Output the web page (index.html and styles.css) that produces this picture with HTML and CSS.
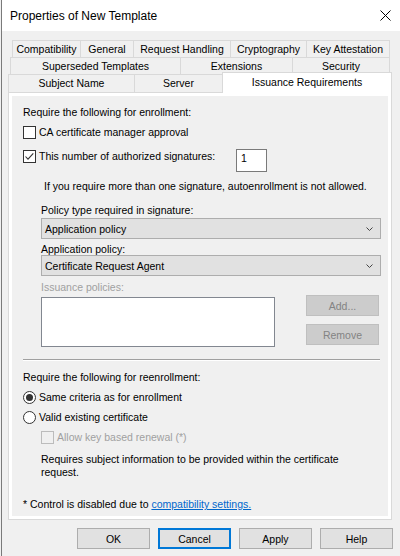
FILE: index.html
```html
<!DOCTYPE html>
<html lang="en">
<head>
<meta charset="utf-8">
<title>Properties of New Template</title>
<link rel="stylesheet" href="styles.css">
</head>
<body>
<div class="window">
  <header class="titlebar">
    <span class="title">Properties of New Template</span>
    <svg class="close" width="11" height="11" viewBox="0 0 11 11" aria-label="Close">
      <path d="M0.5 0.5 L10.5 10.5 M10.5 0.5 L0.5 10.5" stroke="#000" stroke-width="1" fill="none"/>
    </svg>
  </header>

  <nav class="tabs">
    <div class="tab-row row-1">
      <div class="tab t-compat">Compatibility</div>
      <div class="tab t-general">General</div>
      <div class="tab t-request">Request Handling</div>
      <div class="tab t-crypto">Cryptography</div>
      <div class="tab t-attest">Key Attestation</div>
    </div>
    <div class="tab-row row-2">
      <div class="tab t-superseded">Superseded Templates</div>
      <div class="tab t-ext">Extensions</div>
      <div class="tab t-security">Security</div>
    </div>
    <div class="tab-row row-3">
      <div class="tab t-subject">Subject Name</div>
      <div class="tab t-server">Server</div>
      <div class="tab t-issuance active">Issuance Requirements</div>
    </div>
  </nav>

  <section class="panel">
    <div class="page">
      <div class="heading">Require the following for enrollment:</div>

      <label class="check-row row-ca">
        <span class="check"></span>
        <span>CA certificate manager approval</span>
      </label>

      <div class="sig-row">
        <label class="check-row sig-label">
          <span class="check checked">
            <svg width="11" height="11" viewBox="0 0 11 11"><polyline points="1.5,5.5 4,8.2 9.3,2.3" fill="none" stroke="#333" stroke-width="1.1"/></svg>
          </span>
          <span>This number of authorized signatures:</span>
        </label>
        <div class="num-box">1</div>
      </div>

      <div class="note">If you require more than one signature, autoenrollment is not allowed.</div>

      <div class="field-label label-policy-type">Policy type required in signature:</div>
      <div class="select select-1">
        <span>Application policy</span>
        <svg class="chev" width="7" height="4" viewBox="0 0 7 4"><polyline points="0.5,0.5 3.5,3.5 6.5,0.5" fill="none" stroke="#444" stroke-width="1"/></svg>
      </div>

      <div class="field-label label-app-policy">Application policy:</div>
      <div class="select select-2">
        <span>Certificate Request Agent</span>
        <svg class="chev" width="7" height="4" viewBox="0 0 7 4"><polyline points="0.5,0.5 3.5,3.5 6.5,0.5" fill="none" stroke="#444" stroke-width="1"/></svg>
      </div>

      <div class="field-label disabled label-issuance">Issuance policies:</div>
      <div class="policy-box">
        <div class="listbox"></div>
        <div class="side-buttons">
          <div class="btn disabled-btn">Add...</div>
          <div class="btn disabled-btn">Remove</div>
        </div>
      </div>

      <div class="separator"></div>

      <div class="heading heading-renew">Require the following for reenrollment:</div>

      <label class="check-row radio-row radio-first">
        <span class="radio selected"></span>
        <span>Same criteria as for enrollment</span>
      </label>
      <label class="check-row radio-row">
        <span class="radio"></span>
        <span>Valid existing certificate</span>
      </label>

      <label class="check-row renew-row disabled">
        <span class="check check-disabled"></span>
        <span>Allow key based renewal (*)</span>
      </label>

      <p class="requires">Requires subject information to be provided within the certificate request.</p>

      <p class="footnote">* Control is disabled due to <a href="#" class="link">compatibility settings.</a></p>
    </div>
  </section>

  <footer class="buttons">
    <div class="btn">OK</div>
    <div class="btn focused">Cancel</div>
    <div class="btn">Apply</div>
    <div class="btn">Help</div>
  </footer>
</div>
</body>
</html>
```

FILE: styles.css
```css
* {
  box-sizing: border-box;
}

html,
body {
  margin: 0;
  padding: 0;
}

body {
  width: 400px;
  height: 556px;
  overflow: hidden;
  background: #f0f0f0;
  font-family: "Liberation Sans", Arial, sans-serif;
  font-size: 10.5px;
  color: #000;
}

/* window frame */
.window {
  height: 556px;
  margin-left: 1px;
  border-left: 1px solid #7a7a7a;
}

.titlebar {
  height: 31px;
  background: #fff;
  display: flex;
  align-items: center;
  justify-content: space-between;
  padding: 0 9px 0 8px;
}

.title {
  font-size: 12px;
}

.close {
  display: block;
}

/* multi-row tab strip */
.tabs {
  padding-top: 9px;
}

.tab-row {
  display: flex;
}

.tab {
  flex: none;
  height: 17px;
  line-height: 16px;
  border-top: 1px solid #d9d9d9;
  border-left: 1px solid #d9d9d9;
  background: #f0f0f0;
  text-align: center;
  white-space: nowrap;
}

.tab:last-child {
  border-right: 1px solid #d9d9d9;
}

.row-1 { margin-left: 10px; }
.row-2 { margin-left: 8px; }
.row-3 { margin-left: 6px; height: 18px; }

.row-3 .tab {
  height: 18px;
  line-height: 17px;
}

.row-3 .tab.active {
  height: 21px;
  margin-top: -2px;
  line-height: 19px;
  background: #fff;
  position: relative;
  z-index: 1;
}

.t-compat { width: 68px; }
.t-general { width: 53px; }
.t-request { width: 97px; }
.t-crypto { width: 76px; }
.t-attest { width: 84px; }

.t-superseded { width: 170px; }
.t-ext { width: 112px; }
.t-security { width: 98px; }

.t-subject { width: 126px; }
.t-server { width: 88px; }
.t-issuance { width: 170px; }

/* tab page */
.panel {
  margin-left: 6px;
  width: 384px;
  height: 428px;
  border: 1px solid #d9d9d9;
  background: #fff;
  padding: 3px;
}

.page {
  height: 100%;
  background: #f0f0f0;
  padding: 9px 8px 0 11px;
}

.heading {
  line-height: 14px;
  white-space: nowrap;
}

.check-row {
  display: flex;
  align-items: center;
  gap: 3px;
  height: 13px;
  line-height: 13px;
  white-space: nowrap;
}

.row-ca {
  margin-top: 7px;
}

.check {
  flex: none;
  width: 13px;
  height: 13px;
  border: 1px solid #333;
  background: #fff;
  display: flex;
  align-items: center;
  justify-content: center;
}

.check svg {
  display: block;
}

.check-disabled {
  border-color: #bcbcbc;
  background: #f0f0f0;
}

.radio {
  flex: none;
  width: 13px;
  height: 13px;
  border: 1px solid #333;
  border-radius: 50%;
  background: #fff;
  display: flex;
  align-items: center;
  justify-content: center;
}

.radio.selected::after {
  content: "";
  width: 7px;
  height: 7px;
  border-radius: 50%;
  background: #333;
}

.sig-row {
  display: flex;
  align-items: flex-start;
  height: 23px;
  margin-top: 10px;
}

.sig-label {
  width: 213px;
  margin-top: 1px;
}

.num-box {
  width: 31px;
  height: 23px;
  border: 1px solid #7a7a7a;
  background: #fff;
  padding-left: 4px;
  line-height: 17px;
}

.note {
  margin-top: 7px;
  margin-left: 21px;
  line-height: 14px;
  white-space: nowrap;
}

.field-label {
  margin-left: 18px;
  line-height: 12px;
  white-space: nowrap;
}

.label-policy-type { margin-top: 11px; }
.label-app-policy { margin-top: 4px; }
.label-issuance { margin-top: 5px; }

.disabled {
  color: #a0a0a0;
}

.select {
  margin-left: 18px;
  width: 340px;
  height: 21px;
  border: 1px solid #adadad;
  background: #e1e1e1;
  display: flex;
  align-items: center;
  justify-content: space-between;
  padding: 0 7px 0 3px;
  white-space: nowrap;
}

.select-1 { margin-top: 2px; }

.chev {
  display: block;
}

.policy-box {
  display: flex;
  align-items: flex-start;
  margin-top: 2px;
  margin-left: 18px;
}

.listbox {
  width: 234px;
  height: 50px;
  margin-top: 2px;
  border: 1px solid #828790;
  background: #fff;
}

.side-buttons {
  display: flex;
  flex-direction: column;
  gap: 8px;
  margin-left: 31px;
}

.btn {
  width: 73px;
  height: 21px;
  border: 1px solid #adadad;
  background: #e1e1e1;
  display: flex;
  align-items: center;
  justify-content: center;
  white-space: nowrap;
}

.btn.focused {
  border: 2px solid #0078d7;
}

.disabled-btn {
  background: #cccccc;
  border-color: #bfbfbf;
  color: #838383;
}

.separator {
  margin-top: 12px;
  width: 357px;
  height: 2px;
  border-top: 1px solid #a0a0a0;
  border-bottom: 1px solid #fff;
}

.heading-renew {
  margin-top: 9px;
}

.radio-row {
  margin-top: 7px;
}

.renew-row {
  margin-top: 7px;
  margin-left: 18px;
}

.requires {
  margin: 9px 0 0 18px;
  width: 322px;
  line-height: 13px;
}

.footnote {
  margin: 18px 0 0;
  line-height: 14px;
  white-space: nowrap;
}

.link {
  color: #0066cc;
  text-decoration: underline;
}

/* dialog buttons */
.buttons {
  margin-top: 8px;
  display: flex;
  justify-content: flex-end;
  gap: 8px;
  padding-right: 7px;
}
```
